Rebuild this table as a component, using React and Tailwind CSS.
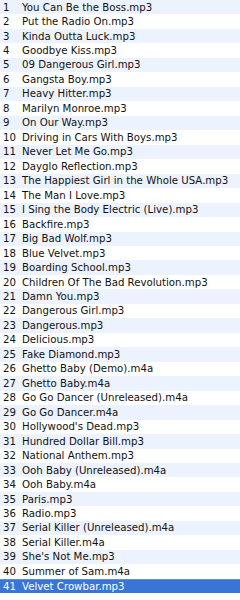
const tracks = [
  "You Can Be the Boss.mp3",
  "Put the Radio On.mp3",
  "Kinda Outta Luck.mp3",
  "Goodbye Kiss.mp3",
  "09 Dangerous Girl.mp3",
  "Gangsta Boy.mp3",
  "Heavy Hitter.mp3",
  "Marilyn Monroe.mp3",
  "On Our Way.mp3",
  "Driving in Cars With Boys.mp3",
  "Never Let Me Go.mp3",
  "Dayglo Reflection.mp3",
  "The Happiest Girl in the Whole USA.mp3",
  "The Man I Love.mp3",
  "I Sing the Body Electric (Live).mp3",
  "Backfire.mp3",
  "Big Bad Wolf.mp3",
  "Blue Velvet.mp3",
  "Boarding School.mp3",
  "Children Of The Bad Revolution.mp3",
  "Damn You.mp3",
  "Dangerous Girl.mp3",
  "Dangerous.mp3",
  "Delicious.mp3",
  "Fake Diamond.mp3",
  "Ghetto Baby (Demo).m4a",
  "Ghetto Baby.m4a",
  "Go Go Dancer (Unreleased).m4a",
  "Go Go Dancer.m4a",
  "Hollywood's Dead.mp3",
  "Hundred Dollar Bill.mp3",
  "National Anthem.mp3",
  "Ooh Baby (Unreleased).m4a",
  "Ooh Baby.m4a",
  "Paris.mp3",
  "Radio.mp3",
  "Serial Killer (Unreleased).m4a",
  "Serial Killer.m4a",
  "She's Not Me.mp3",
  "Summer of Sam.m4a",
  "Velvet Crowbar.mp3",
];

export default function App() {
  return (
    <div className="w-[240px] h-[600px] bg-white overflow-hidden font-['DejaVu_Sans',sans-serif] text-[10.2px] text-[#111]">
      {tracks.map((t, i) => {
        const selected = i === tracks.length - 1;
        const stripe = i % 2 === 0;
        return (
          <div
            key={i}
            className={
              "flex items-center h-[14.475px] whitespace-nowrap " +
              (selected
                ? "bg-[#3875d7] text-white border-t border-[#5a8ee0]"
                : stripe
                ? "bg-[#edf3fe]"
                : "bg-white")
            }
          >
            <span className="w-[22px] pl-[3px] shrink-0">{i + 1}</span>
            <span>{t}</span>
          </div>
        );
      })}
    </div>
  );
}
